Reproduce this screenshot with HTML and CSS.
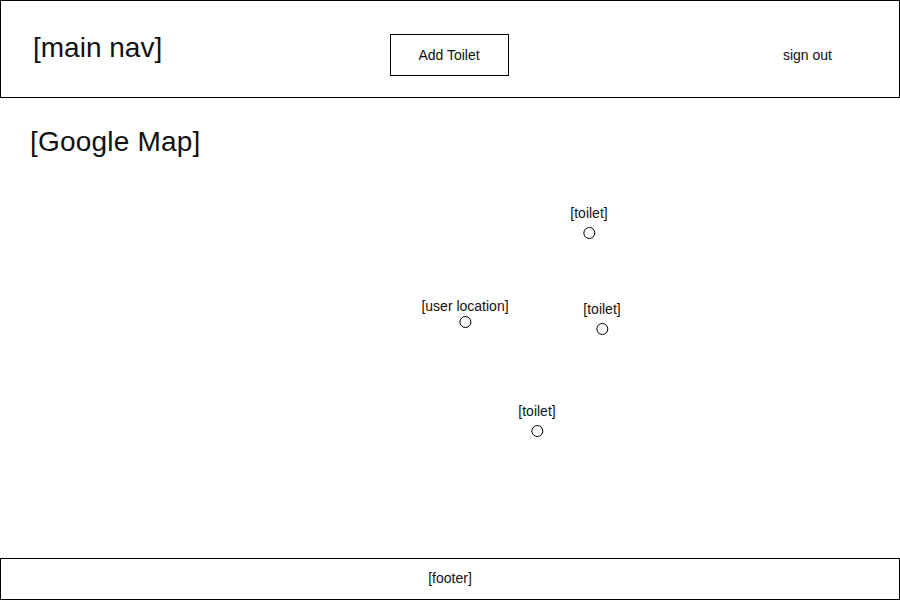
FILE: index.html
```html
<!DOCTYPE html>
<html>
<head>
<meta charset="utf-8">
<link rel="stylesheet" href="styles.css">
</head>
<body>
<div class="page">
  <header class="nav">
    <div class="nav-title">[main nav]</div>
    <button class="add-btn">Add Toilet</button>
    <div class="sign-out">sign out</div>
  </header>
  <main class="map">
    <h1 class="map-title">[Google Map]</h1>
    <div class="pin" style="left:589px; top:107px;">
      <span class="pin-label">[toilet]</span>
      <span class="pin-dot"></span>
    </div>
    <div class="pin pin-user" style="left:465px; top:200px;">
      <span class="pin-label">[user location]</span>
      <span class="pin-dot"></span>
    </div>
    <div class="pin" style="left:602px; top:203px;">
      <span class="pin-label">[toilet]</span>
      <span class="pin-dot"></span>
    </div>
    <div class="pin" style="left:537px; top:305px;">
      <span class="pin-label">[toilet]</span>
      <span class="pin-dot"></span>
    </div>
  </main>
  <footer class="footer">[footer]</footer>
</div>
</body>
</html>
```

FILE: styles.css
```css
* { box-sizing: border-box; }
html, body {
  margin: 0;
  padding: 0;
  background: #fff;
}
body {
  font-family: "Liberation Sans", Arial, sans-serif;
  color: #111;
  width: 900px;
  height: 600px;
  overflow: hidden;
}
.page {
  display: flex;
  flex-direction: column;
  height: 600px;
}
.nav {
  height: 98px;
  border: 1px solid #000;
  display: grid;
  grid-template-columns: 1fr auto 1fr;
  align-items: center;
}
.nav-title {
  font-size: 28px;
  line-height: 32px;
  margin-left: 32px;
  margin-top: -3px;
}
.add-btn {
  width: 119px;
  height: 42px;
  border: 1px solid #000;
  background: #fff;
  font-family: "Liberation Sans", Arial, sans-serif;
  font-size: 14px;
  color: #111;
  padding: 0;
  margin-top: 11px;
  margin-right: 2px;
}
.sign-out {
  justify-self: end;
  margin-right: 67px;
  font-size: 14px;
  margin-top: 11px;
}
.map {
  flex: 1;
  position: relative;
  padding: 28px 0 0 30px;
}
.map-title {
  margin: 0;
  font-weight: normal;
  font-size: 28px;
  line-height: 32px;
  letter-spacing: 0.2px;
}
.pin {
  position: absolute;
  transform: translateX(-50%);
  display: flex;
  flex-direction: column;
  align-items: center;
  gap: 6px;
}
.pin-user { gap: 2px; }
.pin-label {
  font-size: 14px;
  line-height: 16px;
  white-space: nowrap;
}
.pin-dot {
  width: 12px;
  height: 12px;
  border: 1px solid #000;
  border-radius: 50%;
}
.footer {
  height: 42px;
  border: 1px solid #000;
  display: flex;
  align-items: center;
  justify-content: center;
  font-size: 14px;
  padding-bottom: 3px;
}
```
